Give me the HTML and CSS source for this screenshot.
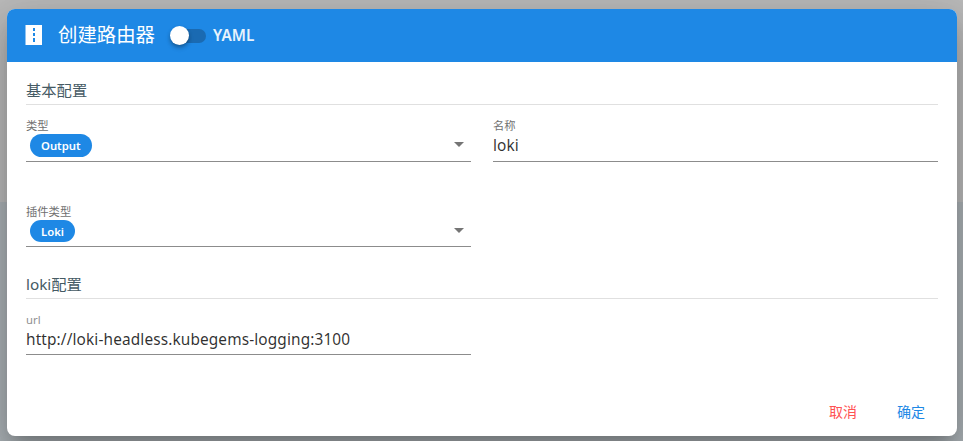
FILE: index.html
```html
<!DOCTYPE html>
<html lang="zh-CN">
<head>
<meta charset="utf-8">
<title>创建路由器</title>
<link rel="stylesheet" href="styles.css">
</head>
<body>
<main class="dialog">
  <header class="header">
    <svg class="header-icon" width="17" height="20" viewBox="0 0 17 20"><path fill="#fff" fill-rule="evenodd" d="M.5 0H17V20H.5ZM8 3V6H10V3ZM8 8V11H10V8ZM8 13V17H10V13Z"/></svg>
    <h1 class="title">创建路由器</h1>
    <div class="switch"><span class="thumb"></span></div>
    <span class="switch-label">YAML</span>
  </header>
  <form class="content">
    <h2 class="section">基本配置</h2>
    <div class="grid">
      <div class="field">
        <label class="label">类型</label>
        <div class="control"><span class="chip chip-output">Output</span><span class="caret"></span></div>
      </div>
      <div class="field">
        <label class="label">名称</label>
        <div class="control"><span class="value">loki</span></div>
      </div>
      <div class="field second">
        <label class="label">插件类型</label>
        <div class="control"><span class="chip chip-loki">Loki</span><span class="caret"></span></div>
      </div>
    </div>
    <h2 class="section section-loki">loki配置</h2>
    <div class="grid">
      <div class="field field-url">
        <label class="label label-url">url</label>
        <div class="control"><span class="value">http://loki-headless.kubegems-logging:3100</span></div>
      </div>
    </div>
  </form>
  <footer class="actions"><span class="cancel">取消</span><span class="confirm">确定</span></footer>
</main>
</body>
</html>
```
FILE: styles.css
```css
* { box-sizing: border-box; }
body {
  margin: 0;
  height: 441px;
  padding: 9px 6px 5px 7px;
  overflow: hidden;
  background: linear-gradient(#bababa 0 202px, #abb2b6 202px);
  font-family: "Noto Sans", "Noto Sans CJK SC", sans-serif;
  color: rgba(0, 0, 0, .82);
}
.dialog {
  display: flex;
  flex-direction: column;
  height: 427px;
  border-radius: 8px;
  overflow: hidden;
  background: #fff;
  box-shadow: 0 11px 15px -7px rgba(0,0,0,.2), 0 24px 38px 3px rgba(0,0,0,.14), 0 9px 46px 8px rgba(0,0,0,.12);
}
.header {
  display: flex;
  align-items: center;
  height: 53px;
  padding-left: 18px;
  background: #1e88e5;
  color: #fff;
}
.header-icon { margin: 0 16px 2px 0; }
.title { margin: 0 0 1px; width: 97px; font-size: 19.4px; font-weight: 400; line-height: 28px; white-space: nowrap; }
.switch {
  display: flex;
  align-items: center;
  width: 32px;
  height: 14px;
  margin-left: 19px;
  border-radius: 7px;
  background: #1a6ab2;
}
.thumb {
  flex: none;
  width: 19px;
  height: 19px;
  margin-left: -4px;
  border-radius: 50%;
  background: #fff;
  box-shadow: 0 2px 4px -1px rgba(0,0,0,.3), 0 3px 5px rgba(0,0,0,.18);
}
.switch-label { margin: 0 0 2px 7px; font-size: 15.3px; font-weight: 600; letter-spacing: .1px; color: #e8f3fc; }
.content { flex: 1; padding: 16px 19px 0; }
.section {
  margin: 0;
  height: 27px;
  border-bottom: 1px solid #e0e0e0;
  font-size: 15.3px;
  font-weight: 400;
  line-height: 25px;
  color: #455a64;
}
.grid { display: grid; grid-template-columns: 445px 445px; column-gap: 22px; }
.field { height: 57px; padding-top: 13px; border-bottom: 1px solid #8c8c8c; }
.second { height: 56px; margin-top: 29px; }
.field-url { height: 56px; }
.label { display: block; height: 16px; font-size: 11.3px; line-height: 16px; color: #707070; }
.label-url { letter-spacing: .1px; color: #909090; }
.control { display: flex; align-items: flex-start; justify-content: space-between; height: 26px; }
.value { font-size: 15.4px; line-height: 24px; letter-spacing: .12px; }
.chip {
  height: 23px;
  margin-left: 4px;
  padding-left: 11px;
  border-radius: 12px;
  background: #1e88e5;
  color: #fff;
  font-size: 11.3px;
  font-weight: 600;
  line-height: 23px;
}
.chip-output { width: 62px; }
.chip-loki { width: 45px; height: 22px; }
.caret { margin: 8px 7px 0 0; border: 5px solid transparent; border-top-color: #757575; border-bottom: 0; }
.section-loki { margin-top: 25px; }
.actions { display: flex; gap: 40px; justify-content: flex-end; padding: 0 32px 14px 0; font-size: 14px; line-height: 20px; }
.cancel { color: #ff5252; }
.confirm { color: #1e88e5; }
```
